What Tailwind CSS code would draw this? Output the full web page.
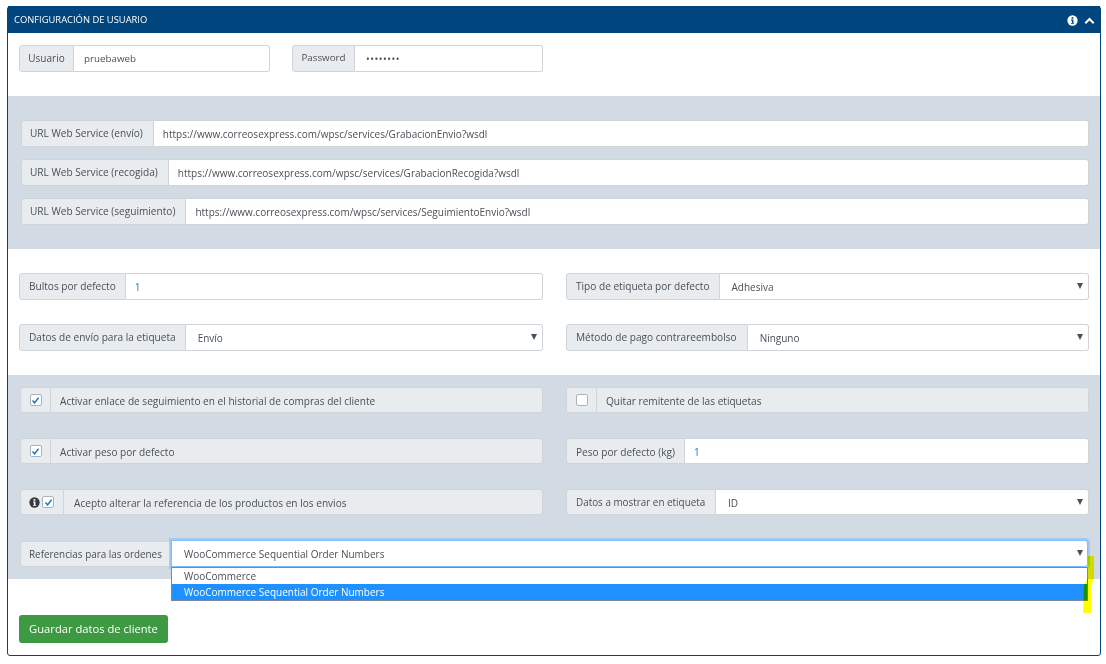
<!DOCTYPE html>
<html lang="es">

<head>
	<meta charset="UTF-8">
	<meta name="viewport" content="width=device-width, initial-scale=1.0">
	<title>Configuración de usuario</title>
	<script src="https://cdn.jsdelivr.net/npm/@tailwindcss/browser@4"></script>
</head>

<body class="bg-white font-['Open_Sans',sans-serif] text-[10.1px] text-[#495057]">

	<div class="relative mt-[6px] ml-[7px] w-[1094px] h-[650px] border border-[#00457e] rounded-[3px] overflow-visible">

		<!-- Cabecera -->
		<div class="h-[27px] -mt-px bg-[#00457e] flex items-center justify-between pt-[2px] pl-[6px] pr-[5px] text-white">
			<span class="text-[9.4px]">CONFIGURACIÓN DE USUARIO</span>
			<div class="flex items-center gap-[6px]">
				<svg class="w-[11px] h-[11px]" viewBox="0 0 12 12"><circle cx="6" cy="6" r="5.6" fill="#fff"/><rect x="5" y="2.3" width="2" height="1.8" fill="#00457e"/><path d="M4.4 5h2.6v3.6h.8v1H4.4v-1h.9V6h-.9z" fill="#00457e"/></svg>
				<svg class="w-[11px] h-[8px]" viewBox="0 0 11 8"><path d="M1.3 6.3 5.5 2l4.2 4.3" fill="none" stroke="#fff" stroke-width="2"/></svg>
			</div>
		</div>

		<!-- Usuario -->
		<div class="flex gap-[22px] pt-[12px] pl-[11px] h-[63px]">
			<div class="flex w-[251px] h-[27px]">
				<span class="w-[55px] shrink-0 flex items-center justify-center bg-[#e9ecef] border border-[#ced4da] rounded-l-[3px] text-[10px]">Usuario</span>
				<input class="flex-1 min-w-0 pl-[10px] pt-[2px] bg-white border border-l-0 border-[#ced4da] rounded-r-[3px] text-[9.8px]" type="text" value="pruebaweb">
			</div>
			<div class="flex w-[251px] h-[27px]">
				<span class="w-[63px] shrink-0 flex items-center justify-center bg-[#e9ecef] border border-[#ced4da] rounded-l-[3px] text-[9.8px]">Password</span>
				<input class="flex-1 min-w-0 pl-[11px] pt-[2px] bg-white border border-l-0 border-[#ced4da] rounded-r-[3px] text-[10px] tracking-[0.5px]" type="password" value="12345678">
			</div>
		</div>

		<!-- URLs -->
		<div class="h-[153px] bg-[#d2dbe3] pt-[24px] pl-[13px] pr-[11px] flex flex-col gap-[12px]">
			<div class="flex h-[27px]">
				<span class="flex items-center pl-[8px] pr-[10px] bg-[#e9ecef] border border-[#ced4da] rounded-l-[3px]">URL Web Service (envío)</span>
				<input class="flex-1 min-w-0 pl-[9px] pt-[2px] bg-white border border-l-0 border-[#ced4da] rounded-r-[3px] text-[10px]" type="text" value="https://www.correosexpress.com/wpsc/services/GrabacionEnvio?wsdl">
			</div>
			<div class="flex h-[27px]">
				<span class="flex items-center pl-[8px] pr-[10px] bg-[#e9ecef] border border-[#ced4da] rounded-l-[3px]">URL Web Service (recogida)</span>
				<input class="flex-1 min-w-0 pl-[9px] pt-[2px] bg-white border border-l-0 border-[#ced4da] rounded-r-[3px] text-[10px]" type="text" value="https://www.correosexpress.com/wpsc/services/GrabacionRecogida?wsdl">
			</div>
			<div class="flex h-[27px]">
				<span class="flex items-center pl-[8px] pr-[10px] bg-[#e9ecef] border border-[#ced4da] rounded-l-[3px]">URL Web Service (seguimiento)</span>
				<input class="flex-1 min-w-0 pl-[9px] pt-[2px] bg-white border border-l-0 border-[#ced4da] rounded-r-[3px] text-[10px]" type="text" value="https://www.correosexpress.com/wpsc/services/SeguimientoEnvio?wsdl">
			</div>
		</div>

		<!-- Valores por defecto -->
		<div class="h-[126px] pt-[24px] pl-[11px] grid grid-cols-[524px_523px] gap-x-[23px] gap-y-[24px] content-start">
			<div class="flex h-[27px]">
				<span class="flex items-center px-[9px] bg-[#e9ecef] border border-[#ced4da] rounded-l-[3px]">Bultos por defecto</span>
				<input class="flex-1 min-w-0 pl-[9px] pt-[2px] bg-white border border-l-0 border-[#ced4da] rounded-r-[3px] text-[#1b75bb] text-[10px]" type="text" value="1">
			</div>
			<div class="relative flex h-[27px]">
				<span class="flex items-center px-[9px] bg-[#e9ecef] border border-[#ced4da] rounded-l-[3px]">Tipo de etiqueta por defecto</span>
				<div class="flex-1 flex items-center pl-[12px] pt-[2px] bg-white border border-l-0 border-[#ced4da] rounded-r-[3px] text-[10px]">Adhesiva</div>
				<svg class="absolute right-[6px] top-[10px] w-[6px] h-[6px]" viewBox="0 0 7 7"><path d="M0 0h7L3.5 7z" fill="#495057"/></svg>
			</div>
			<div class="relative flex h-[27px]">
				<span class="flex items-center px-[9px] bg-[#e9ecef] border border-[#ced4da] rounded-l-[3px]">Datos de envío para la etiqueta</span>
				<div class="flex-1 flex items-center pl-[12px] pt-[2px] bg-white border border-l-0 border-[#ced4da] rounded-r-[3px] text-[10px]">Envío</div>
				<svg class="absolute right-[6px] top-[10px] w-[6px] h-[6px]" viewBox="0 0 7 7"><path d="M0 0h7L3.5 7z" fill="#495057"/></svg>
			</div>
			<div class="relative flex h-[27px]">
				<span class="flex items-center pl-[9px] pr-[10px] bg-[#e9ecef] border border-[#ced4da] rounded-l-[3px]">Método de pago contrareembolso</span>
				<div class="flex-1 flex items-center pl-[12px] pt-[2px] bg-white border border-l-0 border-[#ced4da] rounded-r-[3px] text-[10px]">Ninguno</div>
				<svg class="absolute right-[6px] top-[10px] w-[6px] h-[6px]" viewBox="0 0 7 7"><path d="M0 0h7L3.5 7z" fill="#495057"/></svg>
			</div>
		</div>

		<!-- Opciones -->
		<div class="h-[204px] bg-[#d2dbe3] pt-[12px] pl-[12px]">
			<div class="grid grid-cols-[523px_523px] gap-x-[23px] gap-y-[25px]">
				<div class="flex h-[26px] bg-[#e9ecef] border border-[#ced4da] rounded-[3px]">
					<span class="w-[30px] flex items-center justify-center border-r border-[#ced4da]">
						<span class="w-[12px] h-[12px] bg-white border border-[#a9b4be] rounded-[2px] flex items-center justify-center"><svg class="w-[9px] h-[9px]" viewBox="0 0 9 9"><path d="M1.5 4.5 3.6 6.8 7.6 1.8" fill="none" stroke="#1b75bb" stroke-width="1.4"/></svg></span>
					</span>
					<span class="flex items-center pl-[9px] pt-[3px]">Activar enlace de seguimiento en el historial de compras del cliente</span>
				</div>
				<div class="flex h-[26px] bg-[#e9ecef] border border-[#ced4da] rounded-[3px]">
					<span class="w-[30px] flex items-center justify-center border-r border-[#ced4da]">
						<span class="w-[12px] h-[12px] bg-white border border-[#a9b4be] rounded-[2px]"></span>
					</span>
					<span class="flex items-center pl-[9px] pt-[3px]">Quitar remitente de las etiquetas</span>
				</div>
				<div class="flex h-[26px] bg-[#e9ecef] border border-[#ced4da] rounded-[3px]">
					<span class="w-[30px] flex items-center justify-center border-r border-[#ced4da]">
						<span class="w-[12px] h-[12px] bg-white border border-[#a9b4be] rounded-[2px] flex items-center justify-center"><svg class="w-[9px] h-[9px]" viewBox="0 0 9 9"><path d="M1.5 4.5 3.6 6.8 7.6 1.8" fill="none" stroke="#1b75bb" stroke-width="1.4"/></svg></span>
					</span>
					<span class="flex items-center pl-[9px] pt-[3px]">Activar peso por defecto</span>
				</div>
				<div class="flex h-[26px]">
					<span class="flex items-center px-[9px] pt-[3px] bg-[#e9ecef] border border-[#ced4da] rounded-l-[3px]">Peso por defecto (kg)</span>
					<input class="flex-1 min-w-0 pl-[9px] pt-[2px] bg-white border border-l-0 border-[#ced4da] rounded-r-[3px] text-[#1b75bb] text-[10px]" type="text" value="1">
				</div>
				<div class="flex h-[26px] bg-[#e9ecef] border border-[#ced4da] rounded-[3px]">
					<span class="w-[43px] pl-[8px] flex items-center gap-[2px] border-r border-[#ced4da]">
						<svg class="w-[11px] h-[11px] shrink-0" viewBox="0 0 12 12"><circle cx="6" cy="6" r="5.6" fill="#343a40"/><rect x="5" y="2.3" width="2" height="1.8" fill="#fff"/><path d="M4.4 5h2.6v3.6h.8v1H4.4v-1h.9V6h-.9z" fill="#fff"/></svg>
						<span class="w-[12px] h-[12px] shrink-0 bg-white border border-[#a9b4be] rounded-[2px] flex items-center justify-center"><svg class="w-[9px] h-[9px]" viewBox="0 0 9 9"><path d="M1.5 4.5 3.6 6.8 7.6 1.8" fill="none" stroke="#1b75bb" stroke-width="1.4"/></svg></span>
					</span>
					<span class="flex items-center pl-[10px] pt-[3px]">Acepto alterar la referencia de los productos en los envios</span>
				</div>
				<div class="relative flex h-[26px]">
					<span class="w-[150px] shrink-0 flex items-center pl-[9px] pt-[1px] bg-[#e9ecef] border border-[#ced4da] rounded-l-[3px] text-[9.9px]">Datos a mostrar en etiqueta</span>
					<div class="flex-1 flex items-center pl-[12px] pt-[2px] bg-white border border-l-0 border-[#ced4da] rounded-r-[3px] text-[10px]">ID</div>
					<svg class="absolute right-[6px] top-[10px] w-[6px] h-[6px]" viewBox="0 0 7 7"><path d="M0 0h7L3.5 7z" fill="#495057"/></svg>
				</div>
			</div>
			<div class="relative flex h-[27px] mt-[25px] w-[1068px]">
				<span class="flex items-center w-[151px] mt-[1px] pl-[8px] whitespace-nowrap bg-[#e9ecef] border border-[#ced4da] rounded-l-[3px] text-[9.9px]">Referencias para las ordenes</span>
				<div class="flex-1 flex items-center pl-[12px] pt-[2px] bg-white border border-[#80bdff] rounded-r-[3px] shadow-[0_0_0_2px_rgba(128,189,255,0.6)] text-[10px]">WooCommerce Sequential Order Numbers</div>
				<svg class="absolute right-[5px] top-[10px] w-[6px] h-[6px]" viewBox="0 0 7 7"><path d="M0 0h7L3.5 7z" fill="#495057"/></svg>
				<!-- Lista abierta del select -->
				<div class="absolute left-[151px] right-0 top-[27px] z-10 bg-white border border-[#7a8a9c] text-[10px]">
					<div class="h-[16px] flex items-center pl-[12px]">WooCommerce</div>
					<div class="h-[16px] flex items-center pl-[12px] bg-[#1e90ff] text-white">WooCommerce Sequential Order Numbers</div>
				</div>
			</div>
		</div>

		<!-- Guardar -->
		<div class="pt-[36px] pl-[11px]">
			<button type="button" class="w-[149px] h-[28px] bg-[#3d9942] text-white text-[11.2px] rounded-[3px]">Guardar datos de cliente</button>
		</div>

		<!-- Marca amarilla -->
		<svg class="absolute left-[1075px] top-[549px] z-20 w-[11px] h-[57px] mix-blend-multiply" viewBox="0 0 11 57"><path d="M5 0h6v22l-3 8v27H0l1-28 4-7z" fill="#ffff00"/></svg>
	</div>

</body>

</html>
